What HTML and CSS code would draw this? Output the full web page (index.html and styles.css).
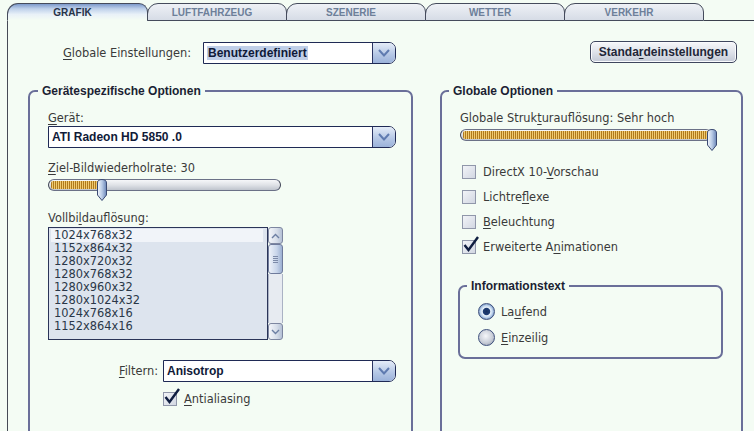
FILE: index.html
```html
<!DOCTYPE html>
<html lang="de">
<head>
<meta charset="utf-8">
<title>Grafik</title>
<link rel="stylesheet" href="styles.css">
</head>
<body>
<div class="tabs">
  <div class="tab active">GRAFIK</div>
  <div class="tab">LUFTFAHRZEUG</div>
  <div class="tab">SZENERIE</div>
  <div class="tab">WETTER</div>
  <div class="tab">VERKEHR</div>
  <div class="tab-fill"></div>
</div>
<div class="panel">
  <div class="toprow">
    <span class="lbl glabel"><u>G</u>lobale Einstellungen:</span>
    <div class="combo combo-global">
      <span class="val"><span class="sel">Benutzerdefiniert</span></span>
      <span class="arrow"><svg width="14" height="10" viewBox="0 0 14 10"><path d="M2 2 L7 7.5 L12 2" fill="none" stroke="#5f7bb0" stroke-width="2"/></svg></span>
    </div>
    <button class="std">Standa<u>r</u>deinstellungen</button>
  </div>
  <div class="columns">
    <fieldset class="group gleft">
      <legend>Gerätespezifische Optionen</legend>
      <div class="gbody gbody-left">
        <div class="lbl"><u>G</u>erät:</div>
        <div class="combo combo-device">
          <span class="val">ATI Radeon HD 5850 .0</span>
          <span class="arrow"><svg width="14" height="10" viewBox="0 0 14 10"><path d="M2 2 L7 7.5 L12 2" fill="none" stroke="#5f7bb0" stroke-width="2"/></svg></span>
        </div>
        <div class="lbl mt13"><u>Z</u>iel-Bildwiederholrate: 30</div>
        <div class="slider slider-left">
          <div class="track"><div class="fill" style="width:47px"></div></div>
          <svg class="thumb" style="left:49px" width="10" height="22" viewBox="0 0 10 22">
            <defs><linearGradient id="tg1" x1="0" x2="1" y1="0" y2="0"><stop offset="0" stop-color="#f2f6fc"/><stop offset="0.5" stop-color="#b9cbe6"/><stop offset="1" stop-color="#6a86b8"/></linearGradient></defs>
            <path d="M0.5 4 Q0.5 0.5 5 0.5 Q9.5 0.5 9.5 4 L9.5 16 L5 21.5 L0.5 16 Z" fill="url(#tg1)" stroke="#3b4a72"/>
          </svg>
        </div>
        <div class="lbl mt10">Vollbi<u>l</u>dauflösung:</div>
        <div class="listrow">
          <div class="list">
            <div class="item first">1024x768x32</div>
            <div class="item">1152x864x32</div>
            <div class="item">1280x720x32</div>
            <div class="item">1280x768x32</div>
            <div class="item">1280x960x32</div>
            <div class="item">1280x1024x32</div>
            <div class="item">1024x768x16</div>
            <div class="item">1152x864x16</div>
          </div>
          <div class="scroll">
            <div class="sbtn"><svg width="9" height="6" viewBox="0 0 9 6"><path d="M1 5 L4.5 1.5 L8 5" fill="none" stroke="#6d7fa3" stroke-width="1.4"/></svg></div>
            <div class="sthumb"><span></span><span></span><span></span><span></span></div>
            <div class="strack"></div>
            <div class="sbtn"><svg width="9" height="6" viewBox="0 0 9 6"><path d="M1 1 L4.5 4.5 L8 1" fill="none" stroke="#6d7fa3" stroke-width="1.4"/></svg></div>
          </div>
        </div>
        <div class="filterrow">
          <span class="lbl"><u>F</u>iltern:</span>
          <div class="combo combo-filter">
            <span class="val">Anisotrop</span>
            <span class="arrow"><svg width="14" height="10" viewBox="0 0 14 10"><path d="M2 2 L7 7.5 L12 2" fill="none" stroke="#5f7bb0" stroke-width="2"/></svg></span>
          </div>
        </div>
        <div class="check aa">
          <span class="box checked"><svg class="tick" width="18" height="18" viewBox="0 0 18 18"><path d="M2.5 10 L6.5 15 L16 2" fill="none" stroke="#0f1e40" stroke-width="2.4"/></svg></span>
          <span class="lbl"><u>A</u>ntialiasing</span>
        </div>
      </div>
    </fieldset>
    <fieldset class="group gright">
      <legend>Globale Optionen</legend>
      <div class="gbody gbody-right">
        <div class="lbl">Globale Struk<u>t</u>urauflösung: Sehr hoch</div>
        <div class="slider slider-right">
          <div class="track"><div class="fill" style="width:245px"></div></div>
          <svg class="thumb" style="left:247px" width="10" height="22" viewBox="0 0 10 22">
            <defs><linearGradient id="tg2" x1="0" x2="1" y1="0" y2="0"><stop offset="0" stop-color="#f2f6fc"/><stop offset="0.5" stop-color="#b9cbe6"/><stop offset="1" stop-color="#6a86b8"/></linearGradient></defs>
            <path d="M0.5 4 Q0.5 0.5 5 0.5 Q9.5 0.5 9.5 4 L9.5 16 L5 21.5 L0.5 16 Z" fill="url(#tg2)" stroke="#3b4a72"/>
          </svg>
        </div>
        <div class="checks">
          <div class="check"><span class="box"></span><span class="lbl">DirectX 10-<u>V</u>orschau</span></div>
          <div class="check"><span class="box"></span><span class="lbl">Lichtre<u>f</u>lexe</span></div>
          <div class="check"><span class="box"></span><span class="lbl"><u>B</u>eleuchtung</span></div>
          <div class="check"><span class="box checked"><svg class="tick" width="18" height="18" viewBox="0 0 18 18"><path d="M2.5 10 L6.5 15 L16 2" fill="none" stroke="#0f1e40" stroke-width="2.4"/></svg></span><span class="lbl">Erweiterte A<u>n</u>imationen</span></div>
        </div>
        <fieldset class="group ginner">
          <legend>Informationstext</legend>
          <div class="gbody gbody-inner">
            <div class="radio"><span class="rb on"></span><span class="lbl">La<u>u</u>fend</span></div>
            <div class="radio"><span class="rb"></span><span class="lbl"><u>E</u>inzeilig</span></div>
          </div>
        </fieldset>
      </div>
    </fieldset>
  </div>
</div>
</body>
</html>
```

FILE: styles.css
```css
* { box-sizing: border-box; }
html, body { margin: 0; padding: 0; }
body {
  width: 754px;
  height: 431px;
  overflow: hidden;
  background: #f4fcf4;
  font-family: "DejaVu Sans", Verdana, sans-serif;
  font-size: 11.4px;
  color: #3a3a3a;
}
u { text-underline-offset: 2px; }

/* tabs */
.tabs {
  display: flex;
  align-items: flex-end;
  height: 21px;
  padding-left: 7px;
}
.tab {
  width: 140px;
  height: 18px;
  margin-left: -1px;
  border: 1px solid #454b5c;
  border-radius: 11px 9px 0 0;
  background: linear-gradient(#eef1f6, #d6dce6);
  font: bold 10px "Liberation Sans", Arial, sans-serif;
  color: #6d7f99;
  display: flex;
  align-items: center;
  justify-content: center;
  padding-right: 10px;
}
.tab:first-child { margin-left: 0; width: 141px; }
.tab.active {
  border-bottom-color: #f4fcf4;
  background: linear-gradient(#7d9acb 0, #bfd1ea 30%, #e9f1f8 65%, #f4fcf4 100%);
  color: #263349;
}
.tab-fill {
  flex: 1;
  height: 1px;
  border-bottom: 1px solid #3b404d;
}

/* panel */
.panel {
  margin-left: 7px;
  height: 410px;
  overflow: hidden;
  border-left: 1px solid #464a56;
  padding: 21px 11px 0 20px;
}
.toprow {
  display: flex;
  align-items: center;
  height: 22px;
  padding-left: 35px;
}
.lbl { line-height: 14px; white-space: nowrap; }
.glabel { width: 140px; }

.combo {
  display: flex;
  height: 22px;
  border: 1px solid #1f2a55;
  border-radius: 0 7px 7px 0;
  background: #fff;
  overflow: hidden;
}
.combo .val {
  flex: 1;
  display: flex;
  align-items: center;
  padding-left: 3px;
  font: bold 12px "Liberation Sans", Arial, sans-serif;
  color: #101a38;
}
.combo .sel { background: #c0cfe8; line-height: 14px; padding: 0 1px; }
.combo .arrow {
  width: 23px;
  display: flex;
  align-items: center;
  justify-content: center;
  border-left: 1px solid #2a3462;
  background: linear-gradient(#e4ecf8, #b7c9e6 55%, #9bb2da);
}
.combo-global { width: 193px; }
.combo-device { width: 348px; margin-top: 1px; }
.combo-filter { width: 233px; }

.std {
  margin: -2px 6px 0 auto;
  width: 147px;
  height: 22px;
  border: 1px solid #3f465e;
  border-radius: 5px;
  background: linear-gradient(#f6f7fa, #dfe3ea 50%, #c3c9d6);
  font: bold 12px "Liberation Sans", Arial, sans-serif;
  color: #1f2638;
  padding: 0;
  box-shadow: inset 0 0 0 1px #fafbfd;
}

.columns {
  display: flex;
  gap: 27px;
  margin-top: 20px;
}
.group {
  margin: 0;
  padding: 0;
  min-width: 0;
  border: 2px solid #6a6f99;
  border-radius: 7px;
}
.group legend {
  padding: 0 4px;
  font: bold 12px/14px "Liberation Sans", Arial, sans-serif;
  color: #1b1f33;
}
.gleft { width: 385px; height: 400px; }
.gleft legend { margin-left: 8px; }
.gright { width: 303px; height: 400px; }
.gright legend { margin-left: 7px; }

.gbody-left { padding: 13px 15px 0 18px; }
.gbody-right { padding: 13px 17px 0 18px; }
.mt13 { margin-top: 13px; }
.mt10 { margin-top: 10px; }

/* slider */
.slider { position: relative; height: 22px; }
.slider-left { width: 233px; margin-top: 2px; }
.slider-right { width: 252px; margin-top: 3px; }
.track {
  margin-top: 4px;
  height: 12px;
  border: 1px solid #6b7187;
  border-left-color: #3f4455;
  border-right-color: #3f4455;
  border-radius: 6px;
  background: linear-gradient(#f6f7f9, #dfe2e7 50%, #bfc4cd);
  padding: 1px 2px;
  display: flex;
}
.fill {
  height: 8px;
  background: repeating-linear-gradient(90deg, #b07a1c 0 1px, #f0cb72 1px 2px);
  border-radius: 2px 0 0 2px;
}
.thumb { position: absolute; top: 0; }

/* list */
.listrow { display: flex; margin-top: 2px; height: 113px; }
.list {
  width: 220px;
  height: 113px;
  border: 1px solid #2a3458;
  background: #dde4ee;
  padding: 1px 4px 0 2px;
  color: #2a3748;
}
.item { height: 13px; line-height: 13px; padding-left: 3px; }
.item.first { background: #f1f4f9; }
.scroll {
  width: 15px;
  display: flex;
  flex-direction: column;
}
.sbtn {
  height: 17px;
  border: 1px solid #7d86a0;
  border-radius: 3px;
  background: linear-gradient(90deg, #f4f6fa, #d6dde9 60%, #b4c0d5);
  display: flex;
  align-items: center;
  justify-content: center;
}
.sthumb {
  height: 30px;
  border: 1px solid #6f7b9c;
  border-radius: 3px;
  background: linear-gradient(90deg, #eef2f9, #c8d5ea 60%, #9cb0d2);
  display: flex;
  flex-direction: column;
  align-items: center;
  justify-content: center;
  gap: 1px;
}
.sthumb span { width: 5px; height: 1px; background: #7c8aa8; }
.strack {
  flex: 1;
  border-left: 1px solid #aab2c4;
  border-right: 1px solid #aab2c4;
  background: #e7ebf1;
}

.filterrow {
  display: flex;
  align-items: center;
  justify-content: flex-end;
  margin-top: 20px;
}
.filterrow .lbl { margin-right: 5px; }

/* checkbox */
.check { display: flex; align-items: center; gap: 7px; height: 14px; }
.check.aa { margin-top: 10px; padding-left: 115px; }
.box {
  position: relative;
  width: 14px;
  height: 14px;
  border: 1px solid #9097aa;
  background: linear-gradient(135deg, #f2f4f8, #d2d7e2);
}
.tick { position: absolute; left: -1px; top: -6px; }
.checks {
  margin-top: 14px;
  padding-left: 2px;
  display: flex;
  flex-direction: column;
  gap: 11px;
}

/* inner group */
.ginner {
  margin: 25px 0 0 -2px;
  width: 265px;
}
.ginner legend { margin-left: 7px; }
.gbody-inner {
  padding: 10px 0 11px 18px;
  display: flex;
  flex-direction: column;
  gap: 9px;
}
.radio { display: flex; align-items: center; gap: 6px; height: 17px; }
.rb {
  width: 17px;
  height: 17px;
  border-radius: 50%;
  border: 1px solid #3d4f7c;
  background: radial-gradient(circle at 45% 40%, #f6f7fa 0, #c9ced8 55%, #8d94a6 100%);
}
.rb.on {
  background: radial-gradient(circle, #17305f 0, #1f3d74 3.2px, #e9f2fb 4.2px, #bcd2ec 6px, #7896c4 8px);
}
```
